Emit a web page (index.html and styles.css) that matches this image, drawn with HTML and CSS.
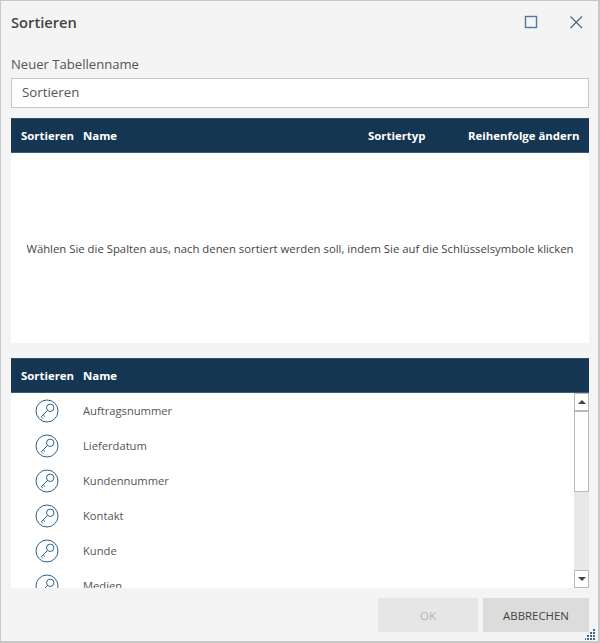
FILE: index.html
```html
<!DOCTYPE html>
<html lang="de">
<head>
<meta charset="utf-8">
<title>Sortieren</title>
<link rel="stylesheet" href="styles.css">
</head>
<body>
<div class="dialog">
  <header class="titlebar">
    <h1 class="title">Sortieren</h1>
    <div class="window-buttons">
      <svg class="win-icon" width="14" height="14" viewBox="0 0 14 14"><rect x="1.5" y="1.5" width="11" height="11" fill="none" stroke="#55789a" stroke-width="1.4"/></svg>
      <svg class="win-icon" width="14" height="14" viewBox="0 0 14 14"><path d="M1.5 1.5L13 13M13 1.5L1.5 13" fill="none" stroke="#3f6588" stroke-width="1.1"/></svg>
    </div>
  </header>
  <label class="field-label">Neuer Tabellenname</label>
  <div class="text-input">Sortieren</div>
  <div class="table-head top-head">
    <span class="col-sort">Sortieren</span>
    <span class="col-name">Name</span>
    <span class="col-type">Sortiertyp</span>
    <span class="col-order">Reihenfolge ändern</span>
  </div>
  <div class="empty-panel">Wählen Sie die Spalten aus, nach denen sortiert werden soll, indem Sie auf die Schlüsselsymbole klicken</div>
  <div class="table-head">
    <span class="col-sort">Sortieren</span>
    <span class="col-name">Name</span>
  </div>
  <div class="list-wrap">
    <ul class="rows">
      <li class="row"><svg class="key" viewBox="0 0 24 24"><use href="#key"/></svg><span>Auftragsnummer</span></li>
      <li class="row"><svg class="key" viewBox="0 0 24 24"><use href="#key"/></svg><span>Lieferdatum</span></li>
      <li class="row"><svg class="key" viewBox="0 0 24 24"><use href="#key"/></svg><span>Kundennummer</span></li>
      <li class="row"><svg class="key" viewBox="0 0 24 24"><use href="#key"/></svg><span>Kontakt</span></li>
      <li class="row"><svg class="key" viewBox="0 0 24 24"><use href="#key"/></svg><span>Kunde</span></li>
      <li class="row"><svg class="key" viewBox="0 0 24 24"><use href="#key"/></svg><span>Medien</span></li>
    </ul>
    <div class="scrollbar">
      <div class="sb-btn"><span class="arrow-up"></span></div>
      <div class="sb-thumb"></div>
      <div class="sb-track"></div>
      <div class="sb-btn"><span class="arrow-down"></span></div>
    </div>
  </div>
  <footer class="footer">
    <button class="btn btn-ok" disabled>OK</button>
    <button class="btn btn-cancel">ABBRECHEN</button>
  </footer>
  <svg class="grip" width="11" height="11" viewBox="0 0 11 11" fill="#3f6588">
    <rect x="8" y="0" width="2" height="2"/>
    <rect x="8" y="3" width="2" height="2"/><rect x="5" y="3" width="2" height="2"/>
    <rect x="8" y="6" width="2" height="2"/><rect x="5" y="6" width="2" height="2"/><rect x="2" y="6" width="2" height="2"/>
    <rect x="8" y="9" width="2" height="2"/><rect x="5" y="9" width="2" height="2"/><rect x="2" y="9" width="2" height="2"/><rect x="0" y="9" width="1" height="2"/>
  </svg>
</div>
<svg class="defs" width="0" height="0">
  <defs>
    <g id="key" fill="none" stroke="#2f5f88" stroke-width="1">
      <circle cx="12" cy="12" r="11"/>
      <circle cx="15.2" cy="8.8" r="3.7"/>
      <path d="M12.6 11.4L6.3 17.7M8.2 15.8L10 17.6M6.3 17.7L8 19.4"/>
    </g>
  </defs>
</svg>
</body>
</html>
```
FILE: styles.css
```css
* { box-sizing: border-box; }
html, body { margin: 0; padding: 0; }
body {
  width: 600px;
  height: 643px;
  overflow: hidden;
  font-family: "Open Sans", "Noto Sans", sans-serif;
}
.dialog {
  position: relative;
  width: 600px;
  height: 643px;
  background: #f4f4f4;
  border: 1px solid #c8c8c8;
  border-width: 1px 2px 2px 1px;
  padding: 0 9px 0 10px;
  display: flex;
  flex-direction: column;
}
.titlebar {
  height: 42px;
  display: flex;
  align-items: center;
  justify-content: space-between;
  flex: none;
}
.title {
  margin: 0;
  font-size: 14.7px;
  font-weight: 600;
  color: #444;
}
.window-buttons {
  display: flex;
  gap: 31px;
  padding-right: 6px;
}
.win-icon { display: block; }
.field-label {
  margin-top: 12px;
  height: 23px;
  line-height: 18px;
  font-size: 13.1px;
  color: #555;
  flex: none;
}
.text-input {
  height: 30px;
  flex: none;
  background: #fff;
  border: 1px solid #c8c8c8;
  padding-left: 10px;
  line-height: 27px;
  font-size: 13.3px;
  color: #555;
}
.table-head {
  position: relative;
  height: 35px;
  flex: none;
  background: #153652;
  border-top: 1px solid #2f4d68;
  border-bottom: 1px solid #3d5c78;
  color: #fff;
  font-size: 11.4px;
  font-weight: 700;
  line-height: 34px;
  display: flex;
}
.top-head { margin-top: 10px; }
.col-sort { width: 72px; padding-left: 10px; flex: none; }
.col-name { flex: 1; }
.col-type { width: 100px; flex: none; }
.col-order { width: 121px; flex: none; }
.empty-panel {
  height: 190px;
  flex: none;
  margin-bottom: 15px;
  background: #fff;
  display: flex;
  align-items: center;
  justify-content: center;
  font-size: 11.33px;
  color: #444;
  white-space: nowrap;
}
.list-wrap {
  height: 195px;
  flex: none;
  display: flex;
  background: #fff;
  overflow: hidden;
}
.rows {
  list-style: none;
  margin: 0;
  padding: 0;
  flex: 1;
  overflow: hidden;
}
.row {
  height: 35px;
  display: flex;
  align-items: center;
  font-size: 11.2px;
  color: #555;
}
.key {
  width: 24px;
  height: 24px;
  margin-left: 24px;
  margin-right: 24px;
  flex: none;
}
.scrollbar {
  width: 15px;
  flex: none;
  display: flex;
  flex-direction: column;
  background: #e8e8e8;
}
.sb-btn {
  height: 18px;
  flex: none;
  background: #fff;
  border: 1px solid #b9b9b9;
  display: flex;
  align-items: center;
  justify-content: center;
}
.sb-thumb {
  height: 81px;
  flex: none;
  background: #fff;
  border: 1px solid #b9b9b9;
}
.sb-track { flex: 1; }
.arrow-up, .arrow-down {
  width: 0;
  height: 0;
  border-left: 4px solid transparent;
  border-right: 4px solid transparent;
}
.arrow-up { border-bottom: 4px solid #444; }
.arrow-down { border-top: 4px solid #444; }
.footer {
  flex: 1;
  display: flex;
  justify-content: flex-end;
  gap: 5px;
  padding-top: 10px;
}
.btn {
  height: 34px;
  border: 0;
  padding: 0;
  font-family: inherit;
  font-size: 11.4px;
  text-align: center;
}
.btn-ok { width: 100px; background: #e6e6e6; color: #b5b5b5; }
.btn-cancel { width: 106px; background: #dcdcdc; color: #444; }
.grip { position: absolute; right: 2px; bottom: 1px; }
.defs { position: absolute; }
```
